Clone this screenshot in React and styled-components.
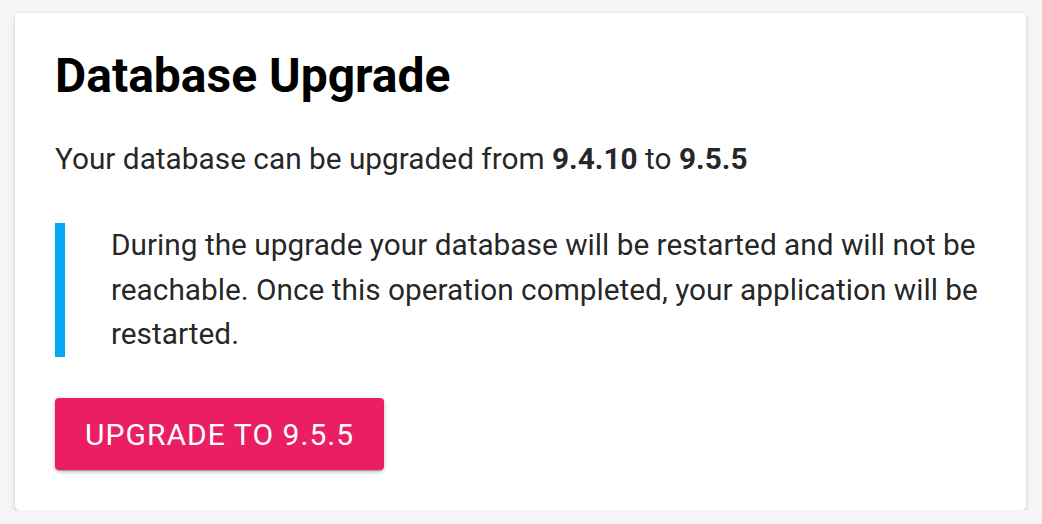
import React from 'react';
import styled, { createGlobalStyle } from 'styled-components';

const GlobalStyle = createGlobalStyle`
  html, body {
    margin: 0;
    background: #f5f5f5;
  }
  body {
    padding: 13px 16px 0 15px;
    font-family: Roboto, "Liberation Sans", sans-serif;
    color: rgba(0, 0, 0, 0.87);
  }
`;

const Card = styled.section`
  background: #fff;
  border-radius: 4px;
  box-shadow: 0 2px 2px 0 rgba(0, 0, 0, 0.14), 0 3px 1px -2px rgba(0, 0, 0, 0.2),
    0 1px 5px 0 rgba(0, 0, 0, 0.12);
  padding: 35px 40px 40px 40px;
  display: flex;
  flex-direction: column;
  align-items: flex-start;
`;

const Title = styled.h1`
  margin: 0;
  font-size: 48px;
  line-height: 56px;
  font-weight: 700;
  color: #000;
`;

const Lead = styled.p`
  margin: 33px 0 0;
  font-size: 29.8px;
  line-height: 44.5px;
  b {
    font-weight: 700;
  }
`;

const Note = styled.blockquote`
  margin: 41.5px 0 0;
  border-left: 10px solid #03a9f4;
  padding: 0 0 0 46px;
  font-size: 29.8px;
  line-height: 44.5px;
`;

const RaisedButton = styled.button`
  margin-top: 41.5px;
  height: 72px;
  padding: 0 30px;
  border: 0;
  border-radius: 4px;
  background: ${(props) => props.color || '#e91e63'};
  color: #fff;
  font-family: Roboto, "Liberation Sans", sans-serif;
  font-size: 30px;
  font-weight: 400;
  letter-spacing: 1.05px;
  text-transform: uppercase;
  box-shadow: 0 2px 3px 0 rgba(0, 0, 0, 0.16), 0 3px 1px -2px rgba(0, 0, 0, 0.2),
    0 1px 6px 0 rgba(0, 0, 0, 0.14);
  cursor: pointer;
`;

export default function App() {
  const from = '9.4.10';
  const to = '9.5.5';
  return (
    <>
      <GlobalStyle />
      <Card>
        <Title>Database Upgrade</Title>
        <Lead>
          Your database can be upgraded from <b>{from}</b> to <b>{to}</b>
        </Lead>
        <Note>
          During the upgrade your database will be restarted and will not be
          reachable. Once this operation completed, your application will be
          restarted.
        </Note>
        <RaisedButton>Upgrade to {to}</RaisedButton>
      </Card>
    </>
  );
}
